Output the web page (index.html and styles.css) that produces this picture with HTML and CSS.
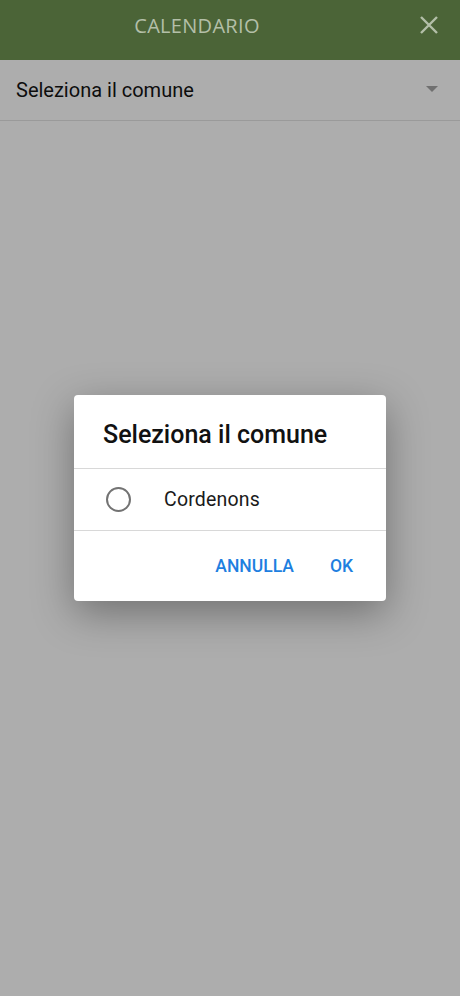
FILE: index.html
```html
<!DOCTYPE html>
<html lang="it">
<head>
    <meta charset="UTF-8">
    <meta name="viewport" content="width=device-width, initial-scale=1.0">
    <title>Calendario</title>
    <link rel="stylesheet" href="styles.css">
</head>
<body>
    <div class="app">
        <header class="topbar">
            <span class="topbar-title">CALENDARIO</span>
            <button class="close-btn" aria-label="Chiudi">
                <svg width="20" height="20" viewBox="0 0 20 20">
                    <path d="M2 2 L18 18 M18 2 L2 18" stroke="#b3bfa8" stroke-width="2.4" fill="none"/>
                </svg>
            </button>
        </header>
        <div class="select-row">
            <span>Seleziona il comune</span>
            <span class="arrow"></span>
        </div>
        <div class="content"></div>
    </div>

    <div class="dialog-layer">
        <div class="dialog">
            <h2 class="dialog-title">Seleziona il comune</h2>
            <div class="dialog-list">
                <label class="option">
                    <span class="radio"></span>
                    <span class="option-text">Cordenons</span>
                </label>
            </div>
            <div class="dialog-actions">
                <button class="action">ANNULLA</button>
                <button class="action">OK</button>
            </div>
        </div>
    </div>
</body>
</html>
```

FILE: styles.css
```css
body {
    margin: 0;
    font-family: Roboto, "Noto Sans", sans-serif;
    background: #adadad;
    height: 996px;
    overflow: hidden;
}
.app {
    display: flex;
    flex-direction: column;
    height: 100%;
}
.topbar {
    height: 60px;
    background: #4b6437;
    display: flex;
    align-items: center;
    justify-content: center;
    position: relative;
}
.topbar-title {
    color: #b3bfa8;
    font-family: "Open Sans", sans-serif;
    font-size: 20px;
    letter-spacing: 0.3px;
    margin-left: -66px;
    margin-bottom: 10px;
}
.close-btn {
    position: absolute;
    right: 21px;
    top: 15px;
    background: none;
    border: none;
    padding: 0;
    width: 20px;
    height: 20px;
}
.select-row {
    height: 60px;
    border-bottom: 1px solid #9a9a9a;
    display: flex;
    align-items: center;
    justify-content: space-between;
    padding: 0 22px 0 16px;
    font-size: 20px;
    color: #0d0d0d;
}
.arrow {
    width: 0;
    height: 0;
    border-left: 6px solid transparent;
    border-right: 6px solid transparent;
    border-top: 6px solid #707070;
    margin-bottom: 2px;
}
.content {
    flex: 1;
}
.dialog-layer {
    position: absolute;
    top: 0;
    left: 0;
    right: 0;
    height: 996px;
    display: flex;
    justify-content: center;
    padding-top: 395px;
    box-sizing: border-box;
}
.dialog {
    width: 312px;
    height: 206px;
    background: #fff;
    border-radius: 4px;
    box-shadow: 0 12px 40px rgba(0, 0, 0, 0.35);
    display: flex;
    flex-direction: column;
}
.dialog-title {
    margin: 0;
    height: 74px;
    box-sizing: border-box;
    padding: 26px 0 0 29px;
    font-size: 25px;
    line-height: 28px;
    font-weight: 500;
    color: #111;
    border-bottom: 1px solid #d8d8d8;
}
.dialog-list {
    height: 61px;
    border-bottom: 1px solid #d8d8d8;
}
.option {
    display: flex;
    align-items: center;
    height: 100%;
    padding-left: 32px;
}
.radio {
    width: 21px;
    height: 21px;
    border: 2.5px solid #737373;
    border-radius: 50%;
}
.option-text {
    margin-left: 33px;
    font-size: 19.5px;
    color: #1a1a1a;
    letter-spacing: 0.2px;
}
.dialog-actions {
    flex: 1;
    display: flex;
    justify-content: flex-end;
    align-items: center;
    gap: 14px;
    padding-right: 22px;
}
.action {
    background: none;
    border: none;
    font-family: Roboto, sans-serif;
    font-size: 17.5px;
    font-weight: 500;
    color: #1e7fe0;
    padding: 6px 11px;
}
```
